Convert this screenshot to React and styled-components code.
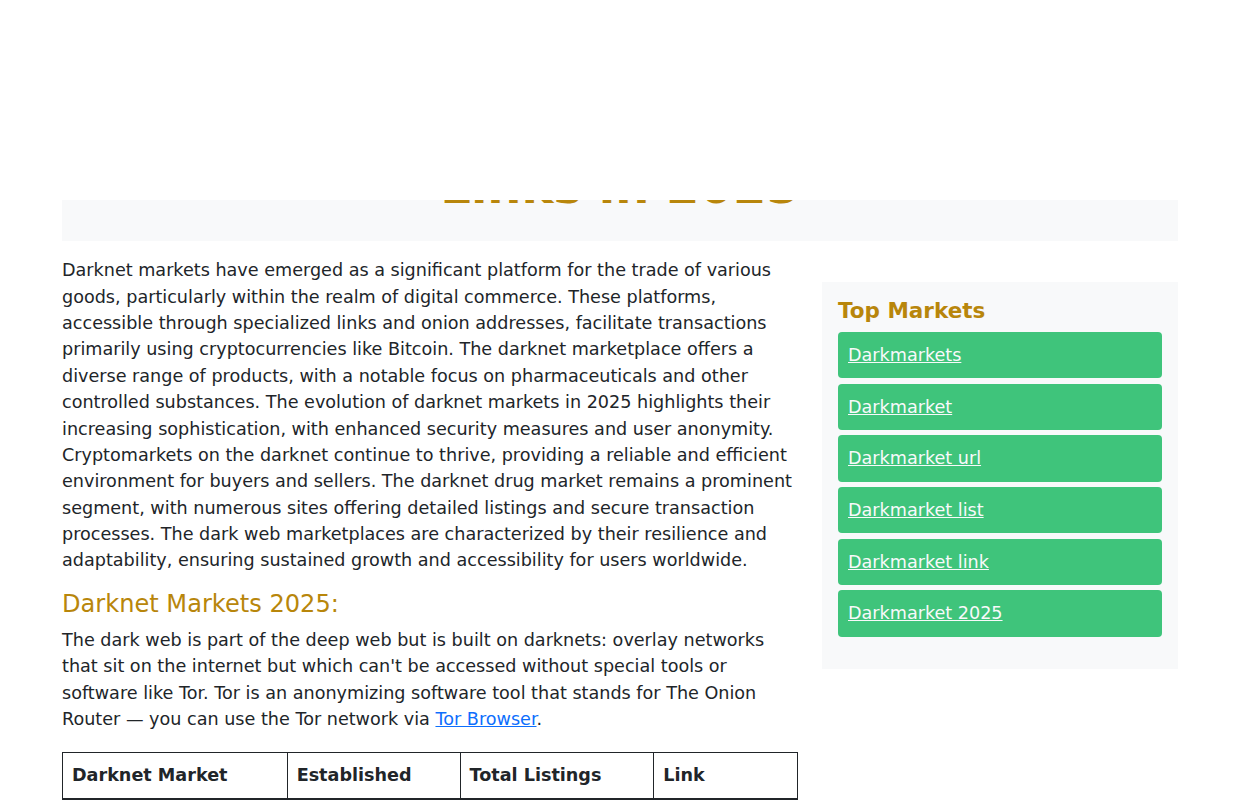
import React from "react"
import styled, { createGlobalStyle } from "styled-components"

const GlobalStyle = createGlobalStyle`
  html { font-size: 16px; }
  body {
    margin: 0;
    font-family: "DejaVu Sans", "Liberation Sans", sans-serif;
    font-size: 1.1rem;
    line-height: 1.5;
    color: #212529;
    background: #fff;
  }
  *, *::before, *::after { box-sizing: border-box; }
`

const gold = "#b8860b"
const green = "#3fc47b"

const TopBar = styled.header`
  position: fixed;
  top: 0;
  left: 0;
  right: 0;
  height: 200px;
  background: #fff;
  z-index: 10;
`

const Container = styled.div`
  max-width: 1140px;
  margin: 0 auto;
  padding: 76px 12px 40px;
`

const Hero = styled.section`
  background: #f8f9fa;
  padding: 24px 24px 26px;
  text-align: center;
`

const Title = styled.h1`
  margin: 0;
  font-size: 3rem;
  font-weight: 700;
  line-height: 1.2;
  color: ${gold};
`

const Row = styled.div`
  display: grid;
  grid-template-columns: 736px 356px;
  gap: 24px;
  margin-top: 16px;
  align-items: start;
`

const Main = styled.main``

const Text = styled.p`
  margin: 0 0 16px;
`

const SubHeading = styled.h4`
  margin: 0 0 8px;
  font-size: 24.1px;
  font-weight: 500;
  line-height: 1.2;
  color: ${gold};
`

const InlineLink = styled.a`
  color: #0d6efd;
  text-decoration: underline;
`

const Table = styled.table`
  width: 100%;
  margin-top: 20px;
  border-collapse: collapse;
  border: 1px solid #212529;
`

const Th = styled.th`
  width: ${p => p.$w}px;
  padding: 9px;
  text-align: left;
  font-weight: 700;
  border: 1px solid #212529;
  border-bottom: 2px solid #212529;
`

const Td = styled.td`
  padding: 9px;
  border: 1px solid #212529;
`

const Sidebar = styled.aside`
  margin-top: 25px;
  background: #f8f9fa;
  padding: 16px;
`

const SideTitle = styled.h5`
  margin: 0 0 8px;
  font-size: 21.5px;
  font-weight: 700;
  line-height: 1.2;
  color: ${gold};
`

const MarketList = styled.ul`
  list-style: none;
  margin: 0 0 16px;
  padding: 0;
  display: flex;
  flex-direction: column;
  gap: 5.3px;
`

const MarketItem = styled.li`
  background: ${green};
  border-radius: 4px;
  padding: 10px;
`

const MarketLink = styled.a`
  color: #f8f9fa;
  text-decoration: underline;
`

const markets = [
  "Darkmarkets",
  "Darkmarket",
  "Darkmarket url",
  "Darkmarket list",
  "Darkmarket link",
  "Darkmarket 2025",
]

const rows = [
  ["Abacus Market", "2021", "40,000+", "Visit"],
  ["Nexus Market", "2023", "18,000+", "Visit"],
  ["Torzon Market", "2022", "15,000+", "Visit"],
]

export default function App() {
  return (
    <>
      <GlobalStyle />
      <TopBar />
      <Container>
        <Hero>
          <Title>
            Darknet Markets Onion
            <br />
            Links in 2025
          </Title>
        </Hero>
        <Row>
          <Main>
            <Text>
              Darknet markets have emerged as a significant platform for the trade of various goods, particularly within the realm of digital commerce. These platforms, accessible through specialized links and onion addresses, facilitate transactions primarily using cryptocurrencies like Bitcoin. The darknet marketplace offers a diverse range of products, with a notable focus on pharmaceuticals and other controlled substances. The evolution of darknet markets in 2025 highlights their increasing sophistication, with enhanced security measures and user anonymity. Cryptomarkets on the darknet continue to thrive, providing a reliable and efficient environment for buyers and sellers. The darknet drug market remains a prominent segment, with numerous sites offering detailed listings and secure transaction processes. The dark web marketplaces are characterized by their resilience and adaptability, ensuring sustained growth and accessibility for users worldwide.
            </Text>
            <SubHeading>Darknet Markets 2025:</SubHeading>
            <Text>
              The dark web is part of the deep web but is built on darknets: overlay networks that sit on the internet but which can't be accessed without special tools or software like Tor. Tor is an anonymizing software tool that stands for The Onion Router — you can use the Tor network via <InlineLink href="#">Tor Browser</InlineLink>.
            </Text>
            <Table>
              <thead>
                <tr>
                  <Th $w={225}>Darknet Market</Th>
                  <Th $w={173}>Established</Th>
                  <Th $w={194}>Total Listings</Th>
                  <Th $w={144}>Link</Th>
                </tr>
              </thead>
              <tbody>
                {rows.map(r => (
                  <tr key={r[0]}>
                    {r.map((c, i) => <Td key={i}>{c}</Td>)}
                  </tr>
                ))}
              </tbody>
            </Table>
          </Main>
          <Sidebar>
            <SideTitle>Top Markets</SideTitle>
            <MarketList>
              {markets.map(m => (
                <MarketItem key={m}>
                  <MarketLink href="#">{m}</MarketLink>
                </MarketItem>
              ))}
            </MarketList>
          </Sidebar>
        </Row>
      </Container>
    </>
  )
}
